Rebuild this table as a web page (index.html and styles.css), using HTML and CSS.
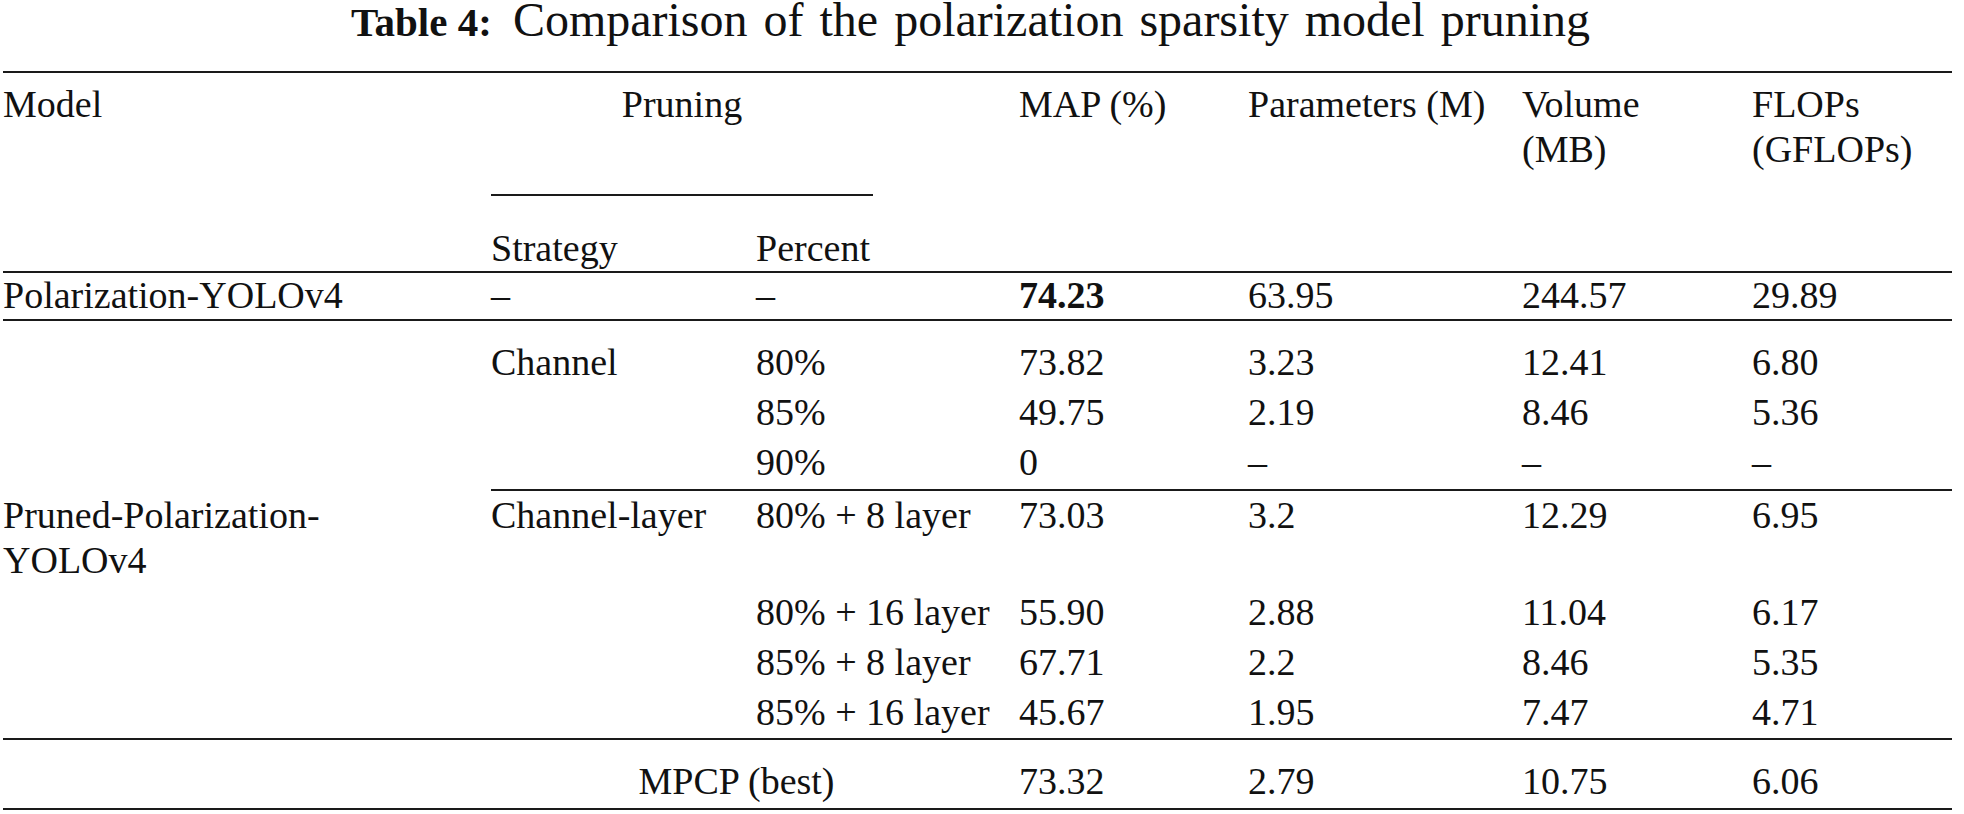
FILE: index.html
```html
<!DOCTYPE html>
<html lang="en">
<head>
<meta charset="utf-8">
<title>Table 4</title>
<link rel="stylesheet" href="styles.css">
</head>
<body>
<div class="page">
  <div class="caption"><span class="label">Table 4:</span><span class="title">Comparison of the polarization sparsity model pruning</span></div>
  <table class="tbl">
    <colgroup>
      <col class="c-model"><col class="c-strat"><col class="c-pct"><col class="c-map"><col class="c-par"><col class="c-vol"><col class="c-flop">
    </colgroup>
    <thead>
      <tr class="h1">
        <th>Model</th>
        <th colspan="2"><div class="group">Pruning</div></th>
        <th>MAP (%)</th>
        <th>Parameters (M)</th>
        <th>Volume<br>(MB)</th>
        <th>FLOPs<br>(GFLOPs)</th>
      </tr>
      <tr class="h2">
        <th></th><th>Strategy</th><th>Percent</th><th></th><th></th><th></th><th></th>
      </tr>
    </thead>
    <tbody>
      <tr class="r-base">
        <td>Polarization-YOLOv4</td><td>–</td><td>–</td><td><b>74.23</b></td><td>63.95</td><td>244.57</td><td>29.89</td>
      </tr>
      <tr class="r-first">
        <td></td><td>Channel</td><td>80%</td><td>73.82</td><td>3.23</td><td>12.41</td><td>6.80</td>
      </tr>
      <tr class="r-next">
        <td></td><td></td><td>85%</td><td>49.75</td><td>2.19</td><td>8.46</td><td>5.36</td>
      </tr>
      <tr class="r-next r-split">
        <td></td><td></td><td>90%</td><td>0</td><td>–</td><td>–</td><td>–</td>
      </tr>
      <tr class="r-cl">
        <td>Pruned-Polarization-<br>YOLOv4</td><td>Channel-layer</td><td>80% + 8 layer</td><td>73.03</td><td>3.2</td><td>12.29</td><td>6.95</td>
      </tr>
      <tr class="r-after">
        <td></td><td></td><td>80% + 16 layer</td><td>55.90</td><td>2.88</td><td>11.04</td><td>6.17</td>
      </tr>
      <tr class="r-next">
        <td></td><td></td><td>85% + 8 layer</td><td>67.71</td><td>2.2</td><td>8.46</td><td>5.35</td>
      </tr>
      <tr class="r-next r-end">
        <td></td><td></td><td>85% + 16 layer</td><td>45.67</td><td>1.95</td><td>7.47</td><td>4.71</td>
      </tr>
      <tr class="r-best">
        <td></td><td colspan="2" class="best-name">MPCP (best)</td><td>73.32</td><td>2.79</td><td>10.75</td><td>6.06</td>
      </tr>
    </tbody>
  </table>
</div>
</body>
</html>
```
FILE: styles.css
```css
html, body {
  margin: 0;
  padding: 0;
  background: #ffffff;
}

body {
  font-family: "Liberation Serif", serif;
  color: #111111;
}

.page {
  width: 1949px;
  padding-left: 3px;
}

.caption {
  text-align: center;
  font-size: 48px;
  line-height: 39px;
  height: 39px;
  padding-right: 14px;
  margin-bottom: 32px;
  white-space: nowrap;
}

.caption .label {
  font-weight: bold;
  font-size: 41px;
}

.caption .title {
  margin-left: 21px;
  word-spacing: 4px;
}

.tbl {
  width: 1949px;
  table-layout: fixed;
  border-collapse: separate;
  border-spacing: 0;
  border-top: 2px solid #1a1a1a;
  border-bottom: 2px solid #1a1a1a;
  font-size: 38px;
  line-height: 45px;
}

.c-model { width: 488px; }
.c-strat { width: 265px; }
.c-pct { width: 263px; }
.c-map { width: 229px; }
.c-par { width: 274px; }
.c-vol { width: 230px; }
.c-flop { width: 200px; }

.tbl th,
.tbl td {
  padding: 0;
  text-align: left;
  vertical-align: top;
  font-weight: normal;
  white-space: nowrap;
}

.tbl b {
  font-weight: bold;
}

.h1 th {
  padding-top: 9px;
}

.group {
  width: 382px;
  height: 112px;
  text-align: center;
  border-bottom: 2px solid #1a1a1a;
}

.h2 th {
  padding-top: 30px;
  border-bottom: 2px solid #1a1a1a;
}

.r-base td {
  padding-bottom: 1px;
  border-bottom: 2px solid #1a1a1a;
}

.r-first td {
  padding-top: 19px;
}

.r-next td {
  padding-top: 5px;
}

.r-split td {
  padding-bottom: 4px;
}

.r-split td + td {
  border-bottom: 2px solid #1a1a1a;
}

.r-cl td {
  padding-top: 2px;
}

.r-after td {
  padding-top: 7px;
}

.r-end td {
  padding-bottom: 3px;
  border-bottom: 2px solid #1a1a1a;
}

.r-best td {
  padding-top: 19px;
  padding-bottom: 4px;
}

.best-name {
  padding-right: 37px !important;
  text-align: center !important;
}
```
